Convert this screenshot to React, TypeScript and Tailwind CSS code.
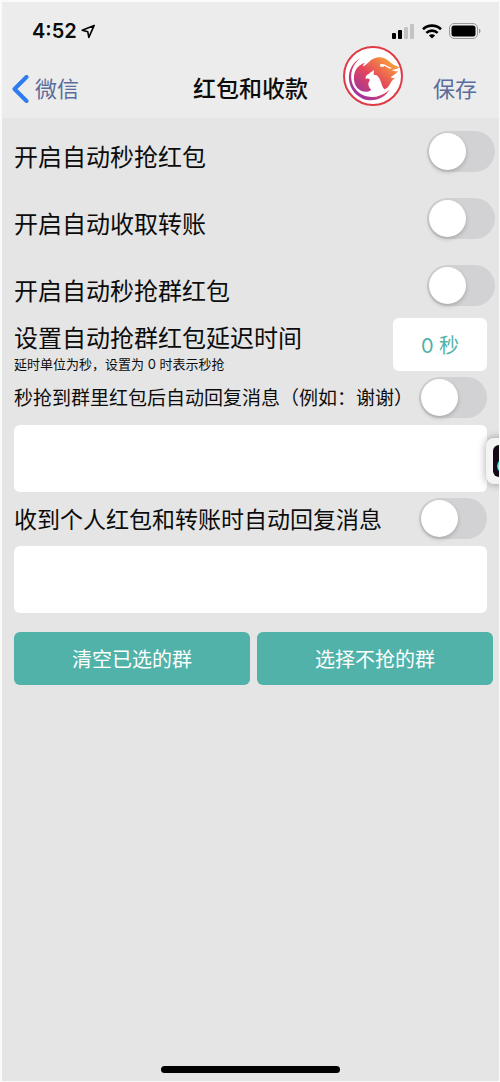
import { useState } from "react";

const switchClass =
  "relative h-[41px] w-[68px] shrink-0 cursor-pointer appearance-none rounded-full bg-[#d2d2d5] transition-colors before:absolute before:left-[2px] before:top-[2px] before:size-[37px] before:rounded-full before:bg-white before:shadow-[0_2px_4px_rgba(0,0,0,0.2)] before:transition-transform checked:bg-[#50b2a8] checked:before:translate-x-[27px]";

const autoRows = [
  { id: "auto-grab", label: "开启自动秒抢红包" },
  { id: "auto-transfer", label: "开启自动收取转账" },
  { id: "auto-group", label: "开启自动秒抢群红包" },
];

function Toggle({ id }: { id: string }) {
  return <input id={id} type="checkbox" role="switch" className={switchClass} />;
}

function StatusBar() {
  return (
    <div className="flex h-[58px] items-center justify-between pl-[30px] pr-[18px]">
      <div className="flex items-center gap-1">
        <span className="font-['Inter'] text-xl font-semibold">4:52</span>
        <svg width="15" height="15" viewBox="0 0 15 15" fill="none" stroke="#000" strokeWidth="1.6" strokeLinejoin="round">
          <path d="M13.2 1.4 1.2 6.2l5.6 1.6 1 5.6z" />
        </svg>
      </div>
      <div className="flex items-center gap-[7px]">
        <svg width="23" height="15" viewBox="0 0 23 15">
          <rect x="0" y="9" width="4" height="6" rx="1" />
          <rect x="6" y="6" width="4" height="9" rx="1" />
          <rect x="12" y="3" width="4" height="12" rx="1" fill="#c3c3c3" />
          <rect x="18" y="0" width="4" height="15" rx="1" fill="#c3c3c3" />
        </svg>
        <svg width="20" height="15" viewBox="0 0 20 15" fill="none" stroke="#000" strokeWidth="2.6">
          <path d="M1 5.2C6 .4 14 .4 19 5.2" />
          <path d="M4.3 8.9c3.3-3 8.1-3 11.4 0" />
          <path d="M10 14.6 6.9 11.4c1.8-1.5 4.4-1.5 6.2 0z" fill="#000" stroke="none" />
        </svg>
        <svg width="32" height="16" viewBox="0 0 32 16">
          <rect x="0.5" y="0.5" width="28" height="15" rx="4.5" fill="none" stroke="#9a9a9a" />
          <rect x="2.5" y="2.5" width="24" height="11" rx="2.5" />
          <path d="M30 5.5c2 .8 2 4.2 0 5z" fill="#9a9a9a" />
        </svg>
      </div>
    </div>
  );
}

function PhoenixLogo() {
  return (
    <svg viewBox="7 6 180 180" className="size-[60px]" aria-label="logo" role="img">
      <defs>
        <linearGradient id="flame" gradientUnits="userSpaceOnUse" x1="50" y1="150" x2="140" y2="45">
          <stop offset="0" stopColor="#a0359a" />
          <stop offset="0.5" stopColor="#e5455c" />
          <stop offset="1" stopColor="#f79a3e" />
        </linearGradient>
      </defs>
      <circle cx="97" cy="96" r="87" fill="#fff" stroke="#df3a45" strokeWidth="6" />
      {/* flame and wings, the bird is the white space inside */}
      <path
        d="M92 138C75 150 50 142 42 118C34 88 48 62 74 56C66 62 64 68 70 66C84 58 88 45 106 41C126 36 138 44 148 54C156 62 166 66 177 70C168 77 160 77 152 78C162 82 168 82 173 82C164 92 156 94 150 100C154 103 160 102 164 101C152 108 150 118 146 124C142 130 138 133 132 136C122 130 122 104 108 94L99 92L100 78C92 84 88 86 84 90C78 92 74 98 75 105C84 101 90 106 86 112C80 120 84 130 92 138Z"
        fill="url(#flame)"
      />
      <path d="M150 72C140 72 136 60 122 62C116 64 122 68 128 66" fill="none" stroke="#fff" strokeWidth="4" strokeLinecap="round" />
      <path d="M60 42C12 66 12 138 66 164C100 178 134 160 146 138C120 160 92 164 68 154C22 132 20 72 60 42Z" fill="url(#flame)" />
    </svg>
  );
}

export default function App() {
  const [delay, setDelay] = useState("0 秒");

  return (
    <div className="relative flex min-h-screen flex-col overflow-hidden bg-[#e5e5e5] border-t-2 border-l-2 border-r border-b border-[#fafafa] font-['Inter','Noto_Sans_CJK_SC',sans-serif] text-[#0c0c0c]">
      <header className="bg-[#ececec]">
        <StatusBar />
        <nav className="relative flex h-[58px] items-center justify-between pl-[10px] pr-[22px] text-[22px] text-[#5b6c9c]">
          <a href="#wechat" className="flex items-center gap-[6px]">
            <svg width="17" height="28" viewBox="0 0 17 28" fill="none" stroke="#2f7cf0" strokeWidth="4" strokeLinecap="round" strokeLinejoin="round">
              <path d="M14.5 2 2.5 14l12 12" />
            </svg>
            微信
          </a>
          <h1 className="absolute left-1/2 -translate-x-1/2 text-[23px] font-medium text-[#0c0c0c]">红包和收款</h1>
          <div className="absolute right-[96px] -top-[14px]">
            <PhoenixLogo />
          </div>
          <button type="button">保存</button>
        </nav>
      </header>

      <main className="flex-1 px-3 pt-[13px]">
        {/* Main switches */}
        <div className="-mr-2 flex flex-col gap-[15px]">
          {autoRows.map((row) => (
            <div key={row.id} className="flex h-[52px] items-start justify-between">
              <label htmlFor={row.id} className="text-2xl leading-[54px]">{row.label}</label>
              <Toggle id={row.id} />
            </div>
          ))}
        </div>

        {/* Delay */}
        <div className="mt-px flex items-start justify-between">
          <div className="pt-[3px]">
            <label htmlFor="delay" className="block text-2xl leading-9">设置自动抢群红包延迟时间</label>
            <p className="text-[13px] leading-[14px]">延时单位为秒，设置为 0 时表示秒抢</p>
          </div>
          <input
            id="delay"
            value={delay}
            onChange={(e) => setDelay(e.target.value)}
            className="h-[53px] w-[94px] rounded-md bg-white text-center text-xl text-[#50b2a8]"
          />
        </div>

        {/* Auto replies */}
        <div className="mt-[6px] flex items-center justify-between">
          <label htmlFor="group-reply" className="whitespace-nowrap pt-1 text-[19px]">秒抢到群里红包后自动回复消息（例如：谢谢）</label>
          <Toggle id="group-reply" />
        </div>
        <textarea aria-label="群红包回复消息" className="mt-[7px] block h-[67px] w-full resize-none rounded-md bg-white p-2" />
        <div className="mt-[6px] flex items-center justify-between">
          <label htmlFor="personal-reply" className="whitespace-nowrap pt-1 text-[23px]">收到个人红包和转账时自动回复消息</label>
          <Toggle id="personal-reply" />
        </div>
        <textarea aria-label="个人回复消息" className="mt-[7px] block h-[67px] w-full resize-none rounded-md bg-white p-2" />

        <div className="-mr-[6px] mt-[19px] grid grid-cols-2 gap-[7px] text-xl text-white">
          <button type="button" className="h-[53px] rounded-md bg-[#50b2a8] pt-[2px]">清空已选的群</button>
          <button type="button" className="h-[53px] rounded-md bg-[#50b2a8] pt-[2px]">选择不抢的群</button>
        </div>
      </main>

      <div className="mx-auto mb-2 h-[7px] w-[179px] rounded-full bg-black" />

      {/* Floating app shortcut, half hidden off the edge */}
      <div className="absolute -right-[33px] top-[436px] size-[46px] rounded-lg bg-[#f4f4f4] p-[7px] shadow-[0_0_8px_rgba(0,0,0,0.35)]">
        <svg viewBox="0 0 32 32" className="size-full">
          <rect width="32" height="32" rx="6" fill="#150817" />
          <path d="M18 5v16a6 6 0 1 1-6-6" fill="none" stroke="#35d6dc" strokeWidth="4" />
          <path d="M19 6v16a6 6 0 1 1-6-6" fill="none" stroke="#fff" strokeWidth="3" />
        </svg>
      </div>
    </div>
  );
}
